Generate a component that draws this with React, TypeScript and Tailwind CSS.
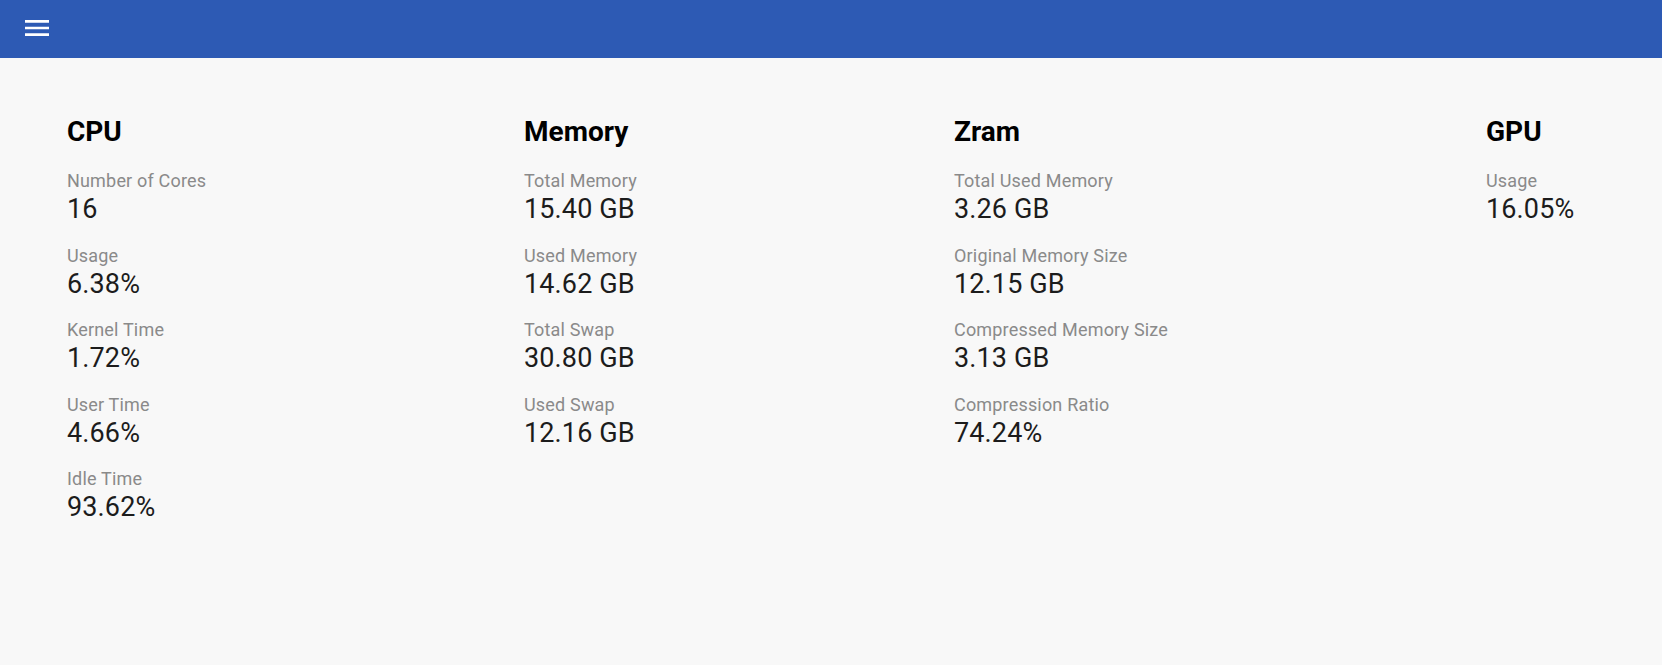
import React from "react";

type Stat = { label: string; value: string };
type Section = { title: string; stats: Stat[] };

const sections: Section[] = [
  {
    title: "CPU",
    stats: [
      { label: "Number of Cores", value: "16" },
      { label: "Usage", value: "6.38%" },
      { label: "Kernel Time", value: "1.72%" },
      { label: "User Time", value: "4.66%" },
      { label: "Idle Time", value: "93.62%" },
    ],
  },
  {
    title: "Memory",
    stats: [
      { label: "Total Memory", value: "15.40 GB" },
      { label: "Used Memory", value: "14.62 GB" },
      { label: "Total Swap", value: "30.80 GB" },
      { label: "Used Swap", value: "12.16 GB" },
    ],
  },
  {
    title: "Zram",
    stats: [
      { label: "Total Used Memory", value: "3.26 GB" },
      { label: "Original Memory Size", value: "12.15 GB" },
      { label: "Compressed Memory Size", value: "3.13 GB" },
      { label: "Compression Ratio", value: "74.24%" },
    ],
  },
  {
    title: "GPU",
    stats: [{ label: "Usage", value: "16.05%" }],
  },
];

/** Material "menu" glyph, three bars. */
function MenuIcon() {
  return (
    <svg viewBox="0 0 24 24" className="h-8 w-8 fill-white" aria-hidden>
      <path d="M3 18h18v-2H3v2zm0-5h18v-2H3v2zm0-7v2h18V6H3z" />
    </svg>
  );
}

function SectionColumn({ section }: { section: Section }) {
  return (
    <section className="flex flex-col">
      <h2 className="text-[28px] leading-[33px] font-bold text-black">{section.title}</h2>
      <div className="mt-[21px] flex flex-col gap-[17.6px]">
        {section.stats.map((s) => (
          <div key={s.label} className="flex flex-col">
            <span className="text-[18px] leading-[24px] tracking-[0.01em] text-[#8a8a8a]">
              {s.label}
            </span>
            <span className="text-[27px] leading-[33px] tracking-[0.005em] text-[#1c1c1c]">
              {s.value}
            </span>
          </div>
        ))}
      </div>
    </section>
  );
}

export default function App() {
  return (
    <div className="min-h-screen bg-[#f8f8f8] font-['Roboto',sans-serif]">
      <header className="flex h-[58px] items-start bg-[#2d5ab4] pl-[21px] pt-3">
        <button type="button" aria-label="Menu" className="block">
          <MenuIcon />
        </button>
      </header>

      <main className="grid grid-cols-[457px_430px_532px_auto] pl-[67px] pt-[57px]">
        {sections.map((s) => (
          <SectionColumn key={s.title} section={s} />
        ))}
      </main>
    </div>
  );
}
